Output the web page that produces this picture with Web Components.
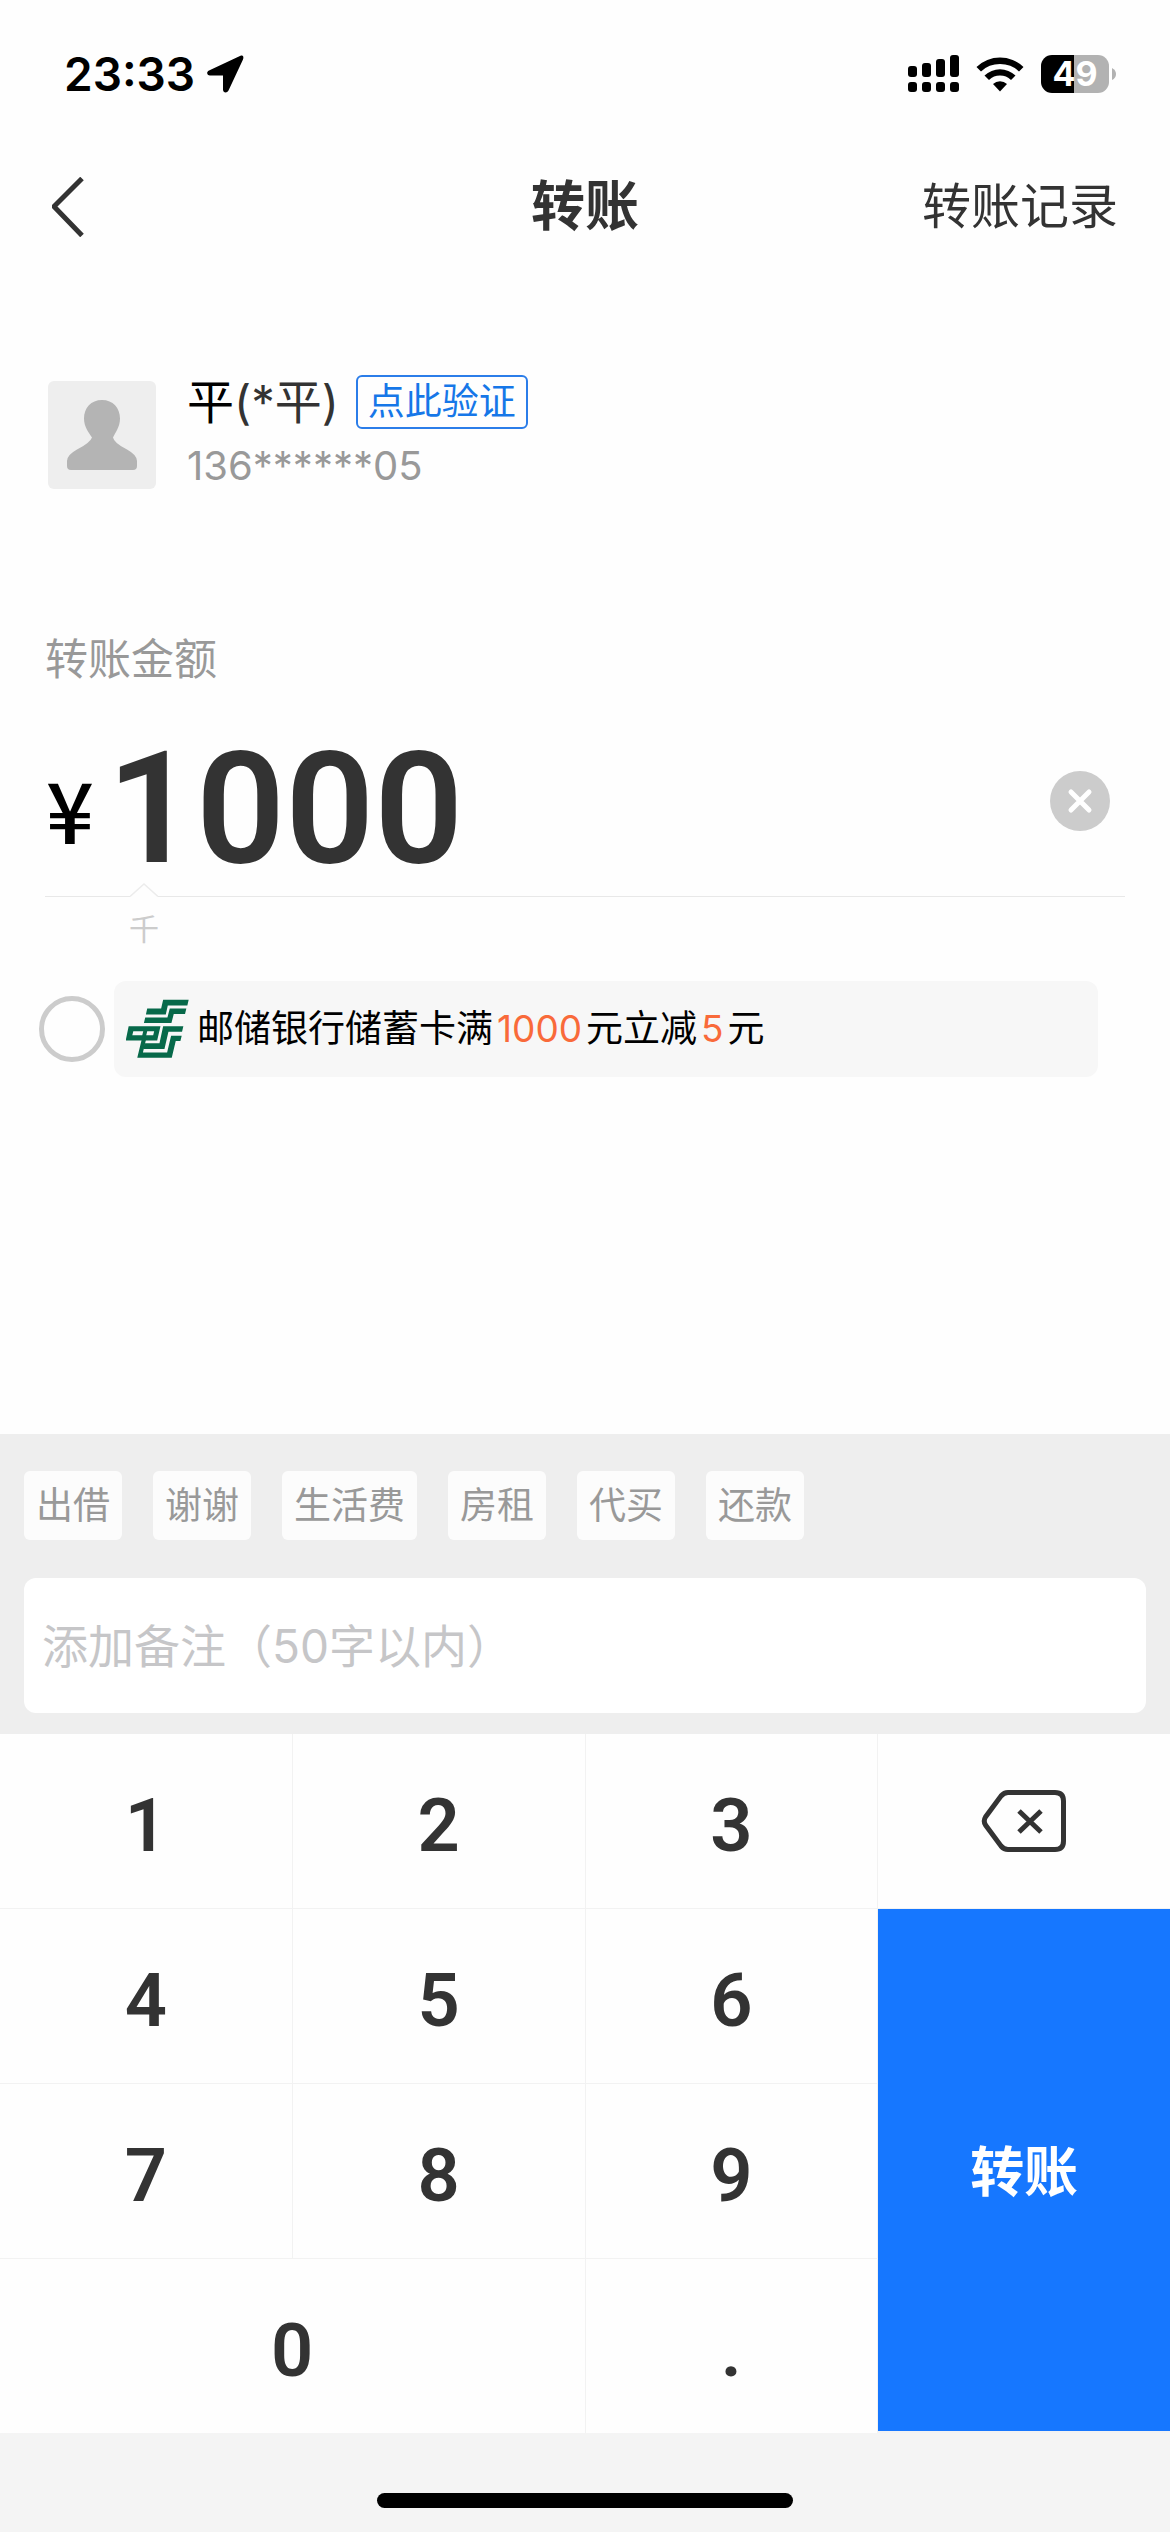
<!DOCTYPE html>
<html lang="zh-CN">
<head>
<meta charset="utf-8">
<meta name="viewport" content="width=device-width, initial-scale=1">
<title>转账</title>
<style>
  html, body { margin: 0; }
  body {
    font-family: Inter, "Noto Sans CJK SC", sans-serif;
    color: #333;
    background: #fefefe;
  }
</style>
</head>
<body>
<transfer-page></transfer-page>

<script>
const base = `
  * { box-sizing: border-box; }
  button, input { font: inherit; color: inherit; margin: 0; padding: 0; border: 0; background: none; border-radius: 0; outline: 0; }
  button { cursor: pointer; }
  a { color: inherit; text-decoration: none; }
  svg { display: block; flex: none; }
`;

function define(name, css, html) {
  const template = document.createElement('template');
  template.innerHTML = `<style>${base}${css}</style>${html}`;
  customElements.define(name, class extends HTMLElement {
    constructor() {
      super();
      this.attachShadow({ mode: 'open' }).append(template.content.cloneNode(true));
    }
  });
}

define('status-bar', `
  :host { display: flex; justify-content: space-between; align-items: center; height: 148px; padding: 0 54px 0 64px; color: #000; }
  .side { display: flex; align-items: center; }
  .time { font-size: 46px; line-height: 56px; font-weight: 600; margin-right: 12px; }
  .signal { margin-right: 17px; }
  .wifi { margin-right: 17px; }
  .battery { display: flex; align-items: center; gap: 3px; }
  .level { width: 68px; height: 38px; border-radius: 11px; background: linear-gradient(90deg, #000 33px, #b2b2b2 33px); color: #fff; font-size: 34px; line-height: 38px; font-weight: 700; text-align: center; }
`, `
  <div class="side">
    <span class="time">23:33</span>
    <svg width="37" height="38" viewBox="0 0 37 38"><path d="M33.500.8 2 15.500C-1 17 0 20.500 3 20.500H16V34.500C16 38 20 38.500 21.500 35.500L36 4.500C37 1.500 36-.5 33.500.8Z"/></svg>
  </div>
  <div class="side">
    <svg class="signal" width="51" height="38" viewBox="0 0 51 38">
      <rect y="11" width="9" height="11" rx="3"/><rect x="14" y="8" width="9" height="14" rx="3"/><rect x="28" y="4" width="9" height="18" rx="3"/><rect x="42" width="9" height="22" rx="3"/>
      <rect y="27" width="9" height="10" rx="3"/><rect x="14" y="27" width="9" height="10" rx="3"/><rect x="28" y="27" width="9" height="10" rx="3"/><rect x="42" y="27" width="9" height="10" rx="3"/>
    </svg>
    <svg class="wifi" width="48" height="36" viewBox="0 0 48 36">
      <path d="M.5 11a34 34 0 0 1 47 0L43 15.500a27.500 27.500 0 0 0-38 0Z"/>
      <path d="M8.500 19.500a22.500 22.500 0 0 1 31 0L35 24a16 16 0 0 0-22 0Z"/>
      <path d="M17 28a10.500 10.500 0 0 1 14 0L24 35.500Z"/>
    </svg>
    <div class="battery">
      <div class="level">49</div>
      <svg width="4" height="12" viewBox="0 0 4 12"><path d="M0 0Q4 2 4 6T0 12Z" fill="#b2b2b2"/></svg>
    </div>
  </div>
`);

define('nav-bar', `
  :host { display: grid; grid-template-columns: 1fr auto 1fr; align-items: center; height: 118px; padding: 0 52px; }
  h1 { margin: 0; font-size: 54px; line-height: 80px; font-weight: 700; }
  .back { width: 60px; height: 60px; }
  .log { justify-self: end; font-size: 49px; line-height: 80px; }
`, `
  <button class="back" aria-label="返回"><svg width="34" height="60" viewBox="2 0 34 60"><path d="M32 1.500 4 29.500 32 58.500" fill="none" stroke="#333" stroke-width="5" stroke-linejoin="round"/></svg></button>
  <h1>转账</h1>
  <a class="log" href="#log">转账记录</a>
`);

define('payee-card', `
  :host { display: flex; align-items: flex-start; gap: 31px; padding: 0 48px; }
  .avatar { margin-top: 7px; }
  .name { display: flex; align-items: center; height: 56px; gap: 17px; font-size: 47px; line-height: 56px; }
  .name b { font-weight: 400; color: #000; }
  .verify { height: 54px; padding: 0 10px; border: 2px solid #2b7de9; border-radius: 6px; color: #1677e8; font-size: 37px; line-height: 50px; }
  .phone { font-size: 40px; line-height: 50px; margin-top: 11px; color: #999; }
`, `
  <svg class="avatar" width="108" height="108" viewBox="0 0 108 108">
    <rect width="108" height="108" rx="6" fill="#eee"/>
    <path d="M54 19C65 19 72 27 72 37.500C72 46 67 52 65 56.500Q66 62 79 68.500Q89 74 89 80V85Q89 89 85 89H23Q19 89 19 85V80Q19 74 29 68.500Q42 62 44 56.500C41 52 36 46 36 37.500C36 27 43 19 54 19Z" fill="#b4b4b4"/>
  </svg>
  <div>
    <div class="name"><span><b>平</b>(*平)</span><button class="verify">点此验证</button></div>
    <div class="phone">136******05</div>
  </div>
`);

define('amount-field', `
  :host { display: block; padding: 0 45px; }
  label { display: block; font-size: 43px; line-height: 62px; color: #999; }
  .row { display: flex; align-items: center; height: 193px; padding: 28px 15px 0 1px; }
  .yen { font-family: "Noto Sans CJK SC", sans-serif; font-size: 84px; line-height: 100px; font-weight: 500; color: #000; padding-top: 14px; width: 61px; }
  input { flex: 1; min-width: 0; font-family: Roboto, sans-serif; font-weight: 600; font-size: 156px; line-height: 144px; height: 160px; padding-top: 16px; }
  .rule { display: flex; align-items: flex-end; height: 14px; }
  .rule::before, .rule::after { content: ""; height: 1px; background: #e8e8e8; }
  .rule::before { width: 85px; }
  .rule::after { flex: 1; }
  .unit { width: 30px; margin-left: 84px; margin-top: 10px; font-size: 30px; line-height: 44px; color: #ccc; }
`, `
  <label for="amount">转账金额</label>
  <div class="row">
    <span class="yen">¥</span>
    <input id="amount" type="text" inputmode="decimal" value="1000">
    <button aria-label="清空"><svg width="60" height="60" viewBox="0 0 60 60"><circle cx="30" cy="30" r="30" fill="#ccc"/><path d="M21 21 39 39M39 21 21 39" stroke="#fff" stroke-width="5" stroke-linecap="round"/></svg></button>
  </div>
  <div class="rule"><svg width="28" height="14" viewBox="0 0 28 14"><path d="M0 13.500 14 1 28 13.500" fill="none" stroke="#ececec" stroke-width="1.500"/></svg></div>
  <div class="unit">千</div>
`);

define('promo-option', `
  :host { display: block; padding: 0 72px 0 39px; }
  label { display: flex; align-items: center; gap: 9px; cursor: pointer; }
  input { appearance: none; flex: none; width: 66px; height: 66px; border: 5px solid #ccc; border-radius: 50%; }
  .box { flex: 1; display: flex; align-items: center; gap: 8px; height: 96px; padding: 0 12px; border-radius: 12px; background: #f7f7f7; color: #000; font-size: 37px; line-height: 54px; }
  em { font-style: normal; color: #f96a3a; margin: 0 4px; }
`, `
  <label>
    <input type="radio" name="promo">
    <span class="box">
      <svg width="63" height="60" viewBox="12 12 190 178" fill="#07694a">
        <path d="M76 39H118L124 13H201L197 30H138L132 57H72Z"/>
        <path d="M70 66H137L144 39H194L190 56H156L149 83H66Z"/>
        <path fill-rule="evenodd" d="M20 93H116L106 136H11ZM34 108 31 120H61L64 108ZM76 108 73 120H94L97 108Z"/>
        <path d="M124 93H185L181 109H140L128 161H64L68 144H113Z"/>
        <path d="M59 134H72L63 172H136L148 121H180L176 137H162L150 188H46Z"/>
      </svg>
      <span>邮储银行储蓄卡满<em>1000</em>元立减<em>5</em>元</span>
    </span>
  </label>
`);

define('note-chip', `
  :host { display: block; }
  button { height: 69px; padding: 0 12px; border-radius: 6px; background: #fcfcfc; color: #999; font-size: 37px; line-height: 69px; }
`, `<button><slot></slot></button>`);

define('note-panel', `
  :host { display: block; height: 300px; padding: 37px 24px 0; background: #eee; }
  .chips { display: flex; gap: 31px; }
  input { display: block; width: 100%; height: 135px; margin-top: 38px; padding: 0 18px; border-radius: 12px; background: #fff; font-size: 46px; }
  input::placeholder { color: #c6c6c8; opacity: 1; }
`, `
  <div class="chips"><slot></slot></div>
  <input type="text" aria-label="添加备注" placeholder="添加备注（50字以内）">
`);

define('num-key', `
  :host { display: flex; }
  button { flex: 1; padding-top: 9px; background: #fefefe; font: 600 74px/90px Roboto, sans-serif; }
`, `<button><slot></slot></button>`);

define('num-pad', `
  :host { display: grid; grid-template-columns: repeat(4, 1fr); grid-template-rows: repeat(4, 174px); gap: 1px; background: #f2f2f2; }
  .del { display: flex; align-items: center; justify-content: center; background: #fefefe; grid-area: 1 / 4; }
  .pay { grid-area: 2 / 4 / 5 / 5; margin-bottom: 2px; padding-bottom: 4px; background: #1677ff; color: #fff; font-size: 54px; font-weight: 700; }
`, `
  <slot></slot>
  <button class="del" aria-label="删除"><svg width="86" height="64" viewBox="0 0 86 64" fill="none" stroke="#333">
    <path d="M27 3.500H74Q82.500 3.500 82.500 12V52Q82.500 60.500 74 60.500H27Q23 60.500 20 57L4.500 36Q2 32 4.500 28L20 7Q23 3.500 27 3.500Z" stroke-width="5"/>
    <path d="M38 22 60 43M60 22 38 43" stroke-width="5"/></svg></button>
  <button class="pay">转账</button>
`);

define('home-indicator', `
  :host { display: flex; justify-content: center; align-items: flex-start; height: 99px; padding-top: 60px; background: #f4f4f4; }
  i { width: 416px; height: 15px; border-radius: 8px; background: #000; }
`, `<i></i>`);

define('transfer-page', `
  :host { display: flex; flex-direction: column; min-height: 100vh; }
  main { flex: 1; display: flex; flex-direction: column; }
  payee-card { margin-top: 108px; }
  amount-field { margin-top: 137px; }
  promo-option { margin-top: 30px; }
  .zero { grid-column: span 2; }
`, `
  <status-bar></status-bar>
  <nav-bar></nav-bar>
  <main>
    <payee-card></payee-card>
    <amount-field></amount-field>
    <promo-option></promo-option>
  </main>
  <note-panel>
    <note-chip>出借</note-chip><note-chip>谢谢</note-chip><note-chip>生活费</note-chip><note-chip>房租</note-chip><note-chip>代买</note-chip><note-chip>还款</note-chip>
  </note-panel>
  <num-pad>
    <num-key>1</num-key><num-key>2</num-key><num-key>3</num-key>
    <num-key>4</num-key><num-key>5</num-key><num-key>6</num-key>
    <num-key>7</num-key><num-key>8</num-key><num-key>9</num-key>
    <num-key class="zero">0</num-key><num-key>.</num-key>
  </num-pad>
  <home-indicator></home-indicator>
`);
</script>
</body>
</html>
